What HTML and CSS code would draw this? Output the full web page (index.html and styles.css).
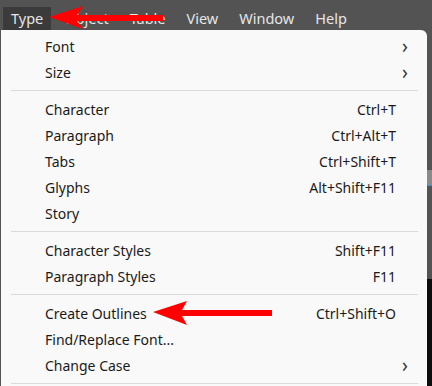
FILE: index.html
```html
<!DOCTYPE html>
<html lang="en">
<head>
  <meta charset="UTF-8">
  <meta name="viewport" content="width=device-width, initial-scale=1.0">
  <title>Type Menu</title>
  <link rel="stylesheet" href="styles.css">
</head>
<body>

  <header class="menubar">
    <span class="menubar-item active">Type</span>
    <span class="menubar-item">Object</span>
    <span class="menubar-item">Table</span>
    <span class="menubar-item">View</span>
    <span class="menubar-item">Window</span>
    <span class="menubar-item">Help</span>

    <svg class="arrow arrow-top" width="120" height="26" viewBox="0 0 120 26">
      <path d="M0 11 L34 0 L28 9 L114 9 L114 15 L28 15 L34 23 Z" fill="#ff0000"/>
    </svg>
  </header>

  <div class="workspace">
    <div class="menu">
      <div class="menu-row">
        <span class="label">Font</span>
        <span class="chevron">&rsaquo;</span>
      </div>
      <div class="menu-row">
        <span class="label">Size</span>
        <span class="chevron">&rsaquo;</span>
      </div>
      <div class="separator"></div>

      <div class="menu-row">
        <span class="label">Character</span>
        <span class="shortcut">Ctrl+T</span>
      </div>
      <div class="menu-row">
        <span class="label">Paragraph</span>
        <span class="shortcut">Ctrl+Alt+T</span>
      </div>
      <div class="menu-row">
        <span class="label">Tabs</span>
        <span class="shortcut">Ctrl+Shift+T</span>
      </div>
      <div class="menu-row">
        <span class="label">Glyphs</span>
        <span class="shortcut">Alt+Shift+F11</span>
      </div>
      <div class="menu-row">
        <span class="label">Story</span>
      </div>
      <div class="separator"></div>

      <div class="menu-row">
        <span class="label">Character Styles</span>
        <span class="shortcut">Shift+F11</span>
      </div>
      <div class="menu-row">
        <span class="label">Paragraph Styles</span>
        <span class="shortcut">F11</span>
      </div>
      <div class="separator"></div>

      <div class="menu-row">
        <span class="label">Create Outlines</span>
        <svg class="arrow arrow-inline" width="122" height="26" viewBox="0 0 122 26">
          <path d="M0 12 L34 1 L29 10 L119 10 L119 16 L29 16 L34 25 Z" fill="#ff0000"/>
        </svg>
        <span class="shortcut">Ctrl+Shift+O</span>
      </div>
      <div class="menu-row">
        <span class="label">Find/Replace Font...</span>
      </div>
      <div class="menu-row">
        <span class="label">Change Case</span>
        <span class="chevron">&rsaquo;</span>
      </div>
      <div class="separator"></div>
    </div>

    <div class="side-strip">
      <div class="strip-dark"></div>
      <div class="strip-gray"></div>
      <div class="strip-dark strip-mid"></div>
      <div class="strip-black"></div>
    </div>
  </div>

</body>
</html>
```

FILE: styles.css
```css
/* General Styles */
body {
  margin: 0;
  padding: 0;
  width: 432px;
  height: 386px;
  overflow: hidden;
  background-color: #535353;
  font-family: 'Noto Sans', 'Open Sans', sans-serif;
  font-size: 14px;
}

/* Menu Bar */
.menubar {
  position: relative;
  display: flex;
  align-items: flex-end;
  gap: 5px;
  height: 30px;
  padding-left: 3px;
  box-sizing: border-box;
}

.menubar-item {
  color: #e6e6e6;
  font-size: 14.5px;
  height: 23px;
  line-height: 22px;
  padding: 0 8px;
}

.menubar-item.active {
  background-color: #3b3b3b;
}

.arrow {
  position: absolute;
}

.arrow-top {
  left: 49px;
  top: 6px;
}

/* Workspace */
.workspace {
  display: flex;
  height: 356px;
}

.menu {
  width: 426px;
  margin-left: 1px;
  background-color: #f9f9f9;
  border-top-right-radius: 6px;
  padding-top: 3px;
  box-sizing: border-box;
}

.menu-row {
  position: relative;
  display: flex;
  align-items: center;
  height: 26px;
  padding: 0 31px 0 44px;
  color: #1a1a1a;
}

.label {
  flex: 1;
}

.shortcut {
  text-align: right;
}

.chevron {
  font-size: 19px;
  line-height: 20px;
  margin-right: -12px;
  color: #333;
}

.arrow-inline {
  left: 152px;
  top: 0;
}

.separator {
  height: 1px;
  margin: 5px 9px 5px 10px;
  background-color: #dadada;
}

/* Right side strip behind the menu */
.side-strip {
  flex: 1;
  display: flex;
  flex-direction: column;
}

.strip-dark {
  height: 140px;
  background-color: #535353;
}

.strip-gray {
  height: 15px;
  background-color: #8a8a8a;
}

.strip-mid {
  height: 93px;
  border-top: 1px solid #3d8ee0;
}

.strip-black {
  flex: 1;
  background-color: #0d0d0d;
}
```
